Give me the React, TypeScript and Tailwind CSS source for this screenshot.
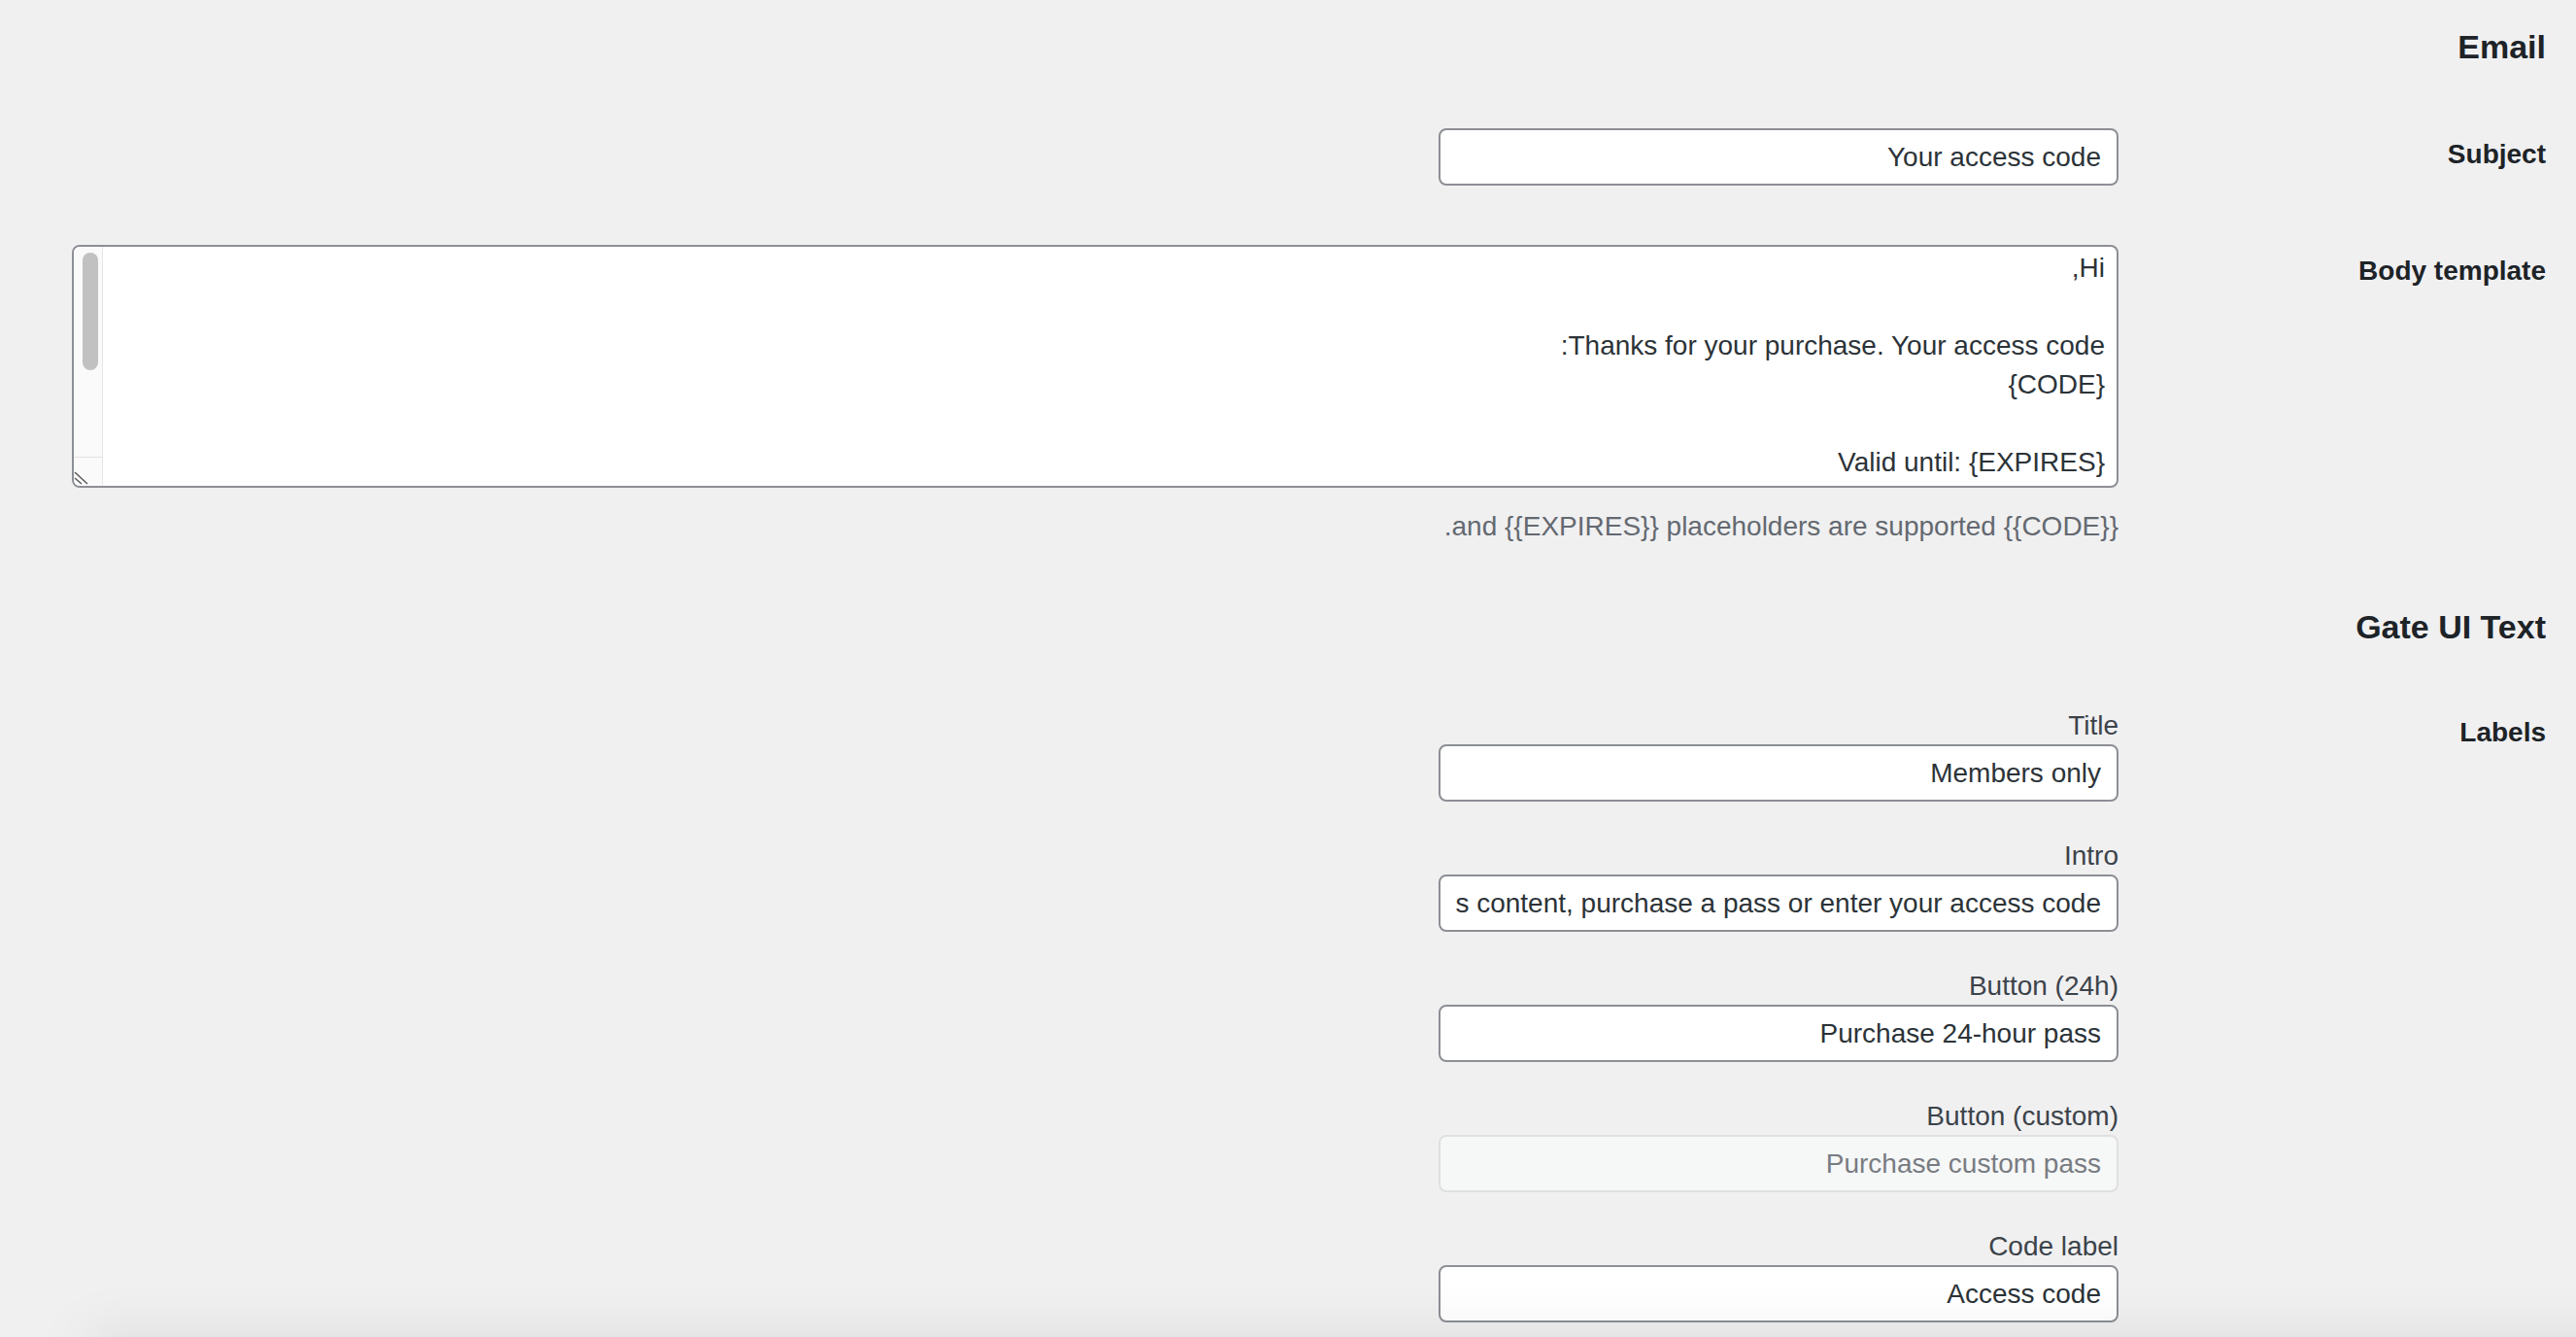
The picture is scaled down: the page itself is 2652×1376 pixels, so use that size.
import React from 'react';

const bodyLines = [
  'Hi,',
  '',
  'Thanks for your purchase. Your access code:',
  '{CODE}',
  '',
  'Valid until: {EXPIRES}',
  '',
];

const gateFields: { label: string; value: string; disabled?: boolean }[] = [
  { label: 'Title', value: 'Members only' },
  { label: 'Intro', value: 'To view this content, purchase a pass or enter your access code.' },
  { label: 'Button (24h)', value: 'Purchase 24-hour pass' },
  { label: 'Button (custom)', value: 'Purchase custom pass', disabled: true },
  { label: 'Code label', value: 'Access code' },
];

function SectionTitle({ children, className }: { children: React.ReactNode; className?: string }) {
  return (
    <h2 className={`text-[34px] leading-[40px] font-bold text-[#1d2327] ${className ?? ''}`}>
      {children}
    </h2>
  );
}

function RowLabel({ children, className }: { children: React.ReactNode; className?: string }) {
  return (
    <div
      className={`w-[420px] shrink-0 pl-[20px] text-[28px] leading-[32px] font-bold text-[#1d2327] ${className ?? ''}`}
    >
      {children}
    </div>
  );
}

function TextInput({ value, disabled }: { value: string; disabled?: boolean }) {
  return (
    <input
      type="text"
      defaultValue={value}
      readOnly
      disabled={disabled}
      className={
        disabled
          ? 'block h-[59px] w-[700px] rounded-[8px] border-2 border-[#e0e0e2] bg-[#f6f7f7] px-[16px] text-[28px] text-[#787c82] outline-none'
          : 'block h-[59px] w-[700px] rounded-[8px] border-2 border-[#8c8f94] bg-white px-[16px] text-[28px] text-[#2c3338] outline-none'
      }
    />
  );
}

// textarea look-alike: the screenshot browser hides native scrollbars,
// so the overlay-style scrollbar and resize grip are drawn by hand
function BodyTemplateBox() {
  return (
    <div className="flex h-[250px] overflow-hidden rounded-[8px] border-2 border-[#8c8f94] bg-white">
      <div className="min-w-0 flex-1 px-[12px] py-[2px] text-[28px] leading-[40px] text-[#2c3338]">
        {bodyLines.map((line, i) => (
          <div key={i} className="h-[40px] whitespace-pre">
            {line}
          </div>
        ))}
      </div>
      <div className="flex w-[30px] shrink-0 flex-col border-r border-[#e6e6e6] bg-[#fafafa]">
        <div className="flex-1 pt-[6px]">
          <div className="mr-[4px] h-[121px] w-[16px] rounded-full bg-[#c1c1c1]" />
        </div>
        <div className="flex h-[30px] items-end justify-end border-t border-[#e2e2e2]">
          <svg width="16" height="14" viewBox="0 0 16 14" className="mb-[1px]">
            <path d="M1 1 L14 13" stroke="#5a5a5a" strokeWidth="1.5" />
            <path d="M1 7 L8 13" stroke="#5a5a5a" strokeWidth="1.5" />
          </svg>
        </div>
      </div>
    </div>
  );
}

export default function App() {
  return (
    <div
      dir="rtl"
      className="h-screen overflow-hidden bg-[#f0f0f1] pl-[54px] pr-[31px] pt-[28px] [font-family:'Liberation_Sans',Arial,sans-serif]"
    >
      <SectionTitle>Email</SectionTitle>

      <div className="mt-[64px] flex">
        <RowLabel className="pt-[11px]">Subject</RowLabel>
        <div className="flex-1 px-[20px]">
          <TextInput value="Your access code" />
        </div>
      </div>

      <div className="mt-[61px] flex">
        <RowLabel className="pt-[11px]">Body template</RowLabel>
        <div className="flex-1 px-[20px]">
          <BodyTemplateBox />
          <p className="mt-[20px] text-[28px] leading-[40px] text-[#646970]">
            {'{{CODE}} and {{EXPIRES}} placeholders are supported.'}
          </p>
        </div>
      </div>

      <SectionTitle className="mt-[63px]">Gate UI Text</SectionTitle>

      <div className="mt-[63px] flex">
        <RowLabel className="pt-[10px]">Labels</RowLabel>
        <div className="flex flex-1 flex-col gap-[37px] px-[20px]">
          {gateFields.map((f) => (
            <div key={f.label}>
              <label className="block text-[28px] leading-[38px] text-[#3c434a]">{f.label}</label>
              <TextInput value={f.value} disabled={f.disabled} />
            </div>
          ))}
        </div>
      </div>

      {/* footer bar sits just below the fold, only its shadow shows */}
      <div className="pointer-events-none fixed top-full left-[90px] -right-[60px] h-[40px] bg-[#f0f0f1] shadow-[0_0_60px_rgba(0,0,0,0.1)]" />
    </div>
  );
}
